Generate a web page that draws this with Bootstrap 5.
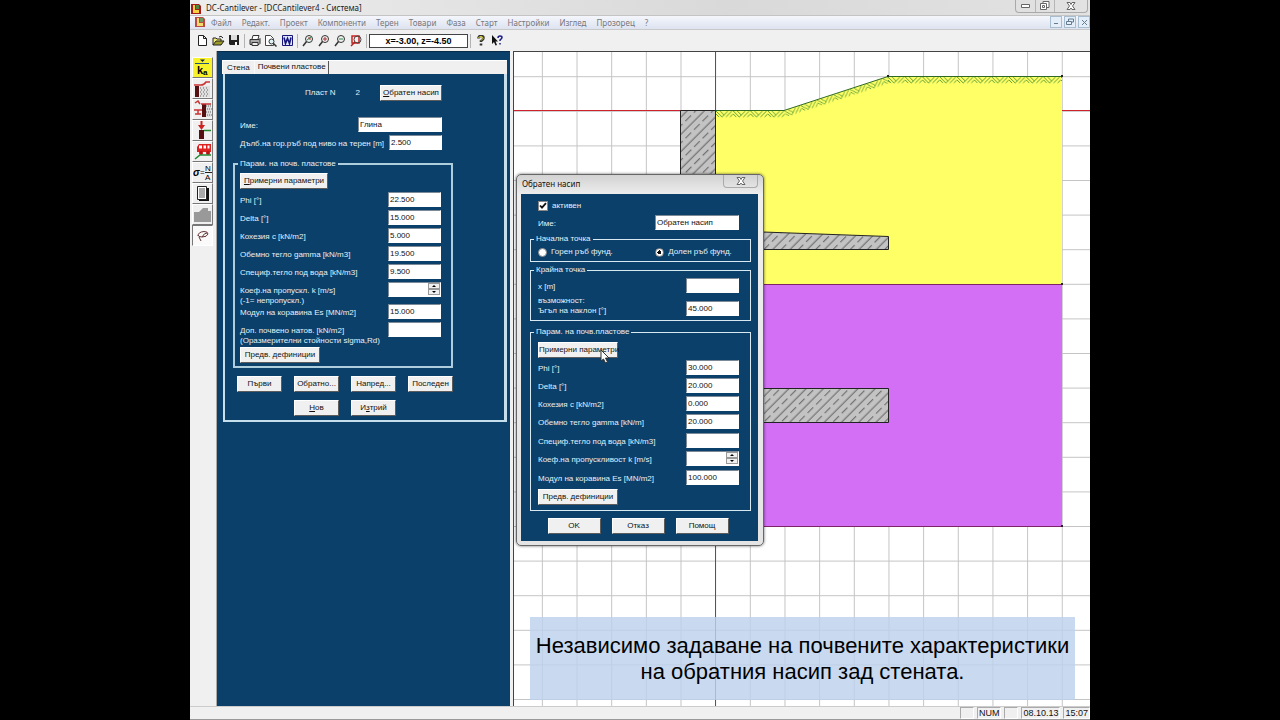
<!DOCTYPE html>
<html lang="bg">
<head>
<meta charset="utf-8">
<meta name="viewport" content="width=device-width, initial-scale=1">
<title>DC-Cantilever - [DCCantilever4 - Система]</title>
<link rel="stylesheet" href="https://cdn.jsdelivr.net/npm/bootstrap@5.3.0/dist/css/bootstrap.min.css">
<style>
:root{--navy:#0b406b;--face:#f0f0f0;--ui:"Liberation Sans",Arial,sans-serif;--shell:"Noto Sans","Open Sans",sans-serif}
body{background:#000;font:8px/10px var(--ui);color:#111}
.stage{padding:0 190px}
.app{min-height:100vh;background:var(--face)}
.titlebar{height:15px;background:linear-gradient(90deg,#ededed,#d9d9d9 60%,#e2e2e2);font:8px/15px var(--shell);color:#222;padding-left:1px}
.menubar{height:15px;background:linear-gradient(#f4f6fb,#dde3f0);border-bottom:1px solid #c8c8c8;border-top:1px solid #c4c4c4;font:8px/13px var(--shell);padding-left:5px}
.menubar a{color:#77777c;text-decoration:none;white-space:nowrap}
.menus{gap:10px;margin-left:5px}
.wctl{border:1px solid #a9a9a9;border-top:0;border-radius:0 0 4px 4px;height:13px;margin-right:2px}
.wctl button,.mdi button{border:0;background:none;padding:0;display:flex;align-items:center;justify-content:center}
.wctl button{width:19px;height:12px}
.wctl button:last-child{width:33px}
.wctl button+button{border-left:1px solid #b5b5b5}
.mdi{gap:2px}
.mdi button{width:12px;height:12px;border:1px solid #a8bdd0;background:#e3eef8}
.toolbar{height:21px;padding:0 4px}
.toolbar button{width:16px;height:16px;border:0;padding:0;background:none}
.toolbar svg{display:block;margin:auto}
.split{width:1px;height:14px;background:#b3b3b3;margin:0 2px}
.coord{width:99px;height:14px;border:1px solid #444;border-radius:0;background:#fff;font:bold 9px/12px var(--ui);text-align:center;padding:0}
.rail{width:27px;padding:6px 3px 0 2px;border-right:1px solid #aaa}
.rail button{display:block;width:21px;height:21px;padding:0;border:1px solid #fff;border-right-color:#777;border-bottom-color:#777;background:var(--face)}
.rail button.down{border-color:#777 #fff #fff #777;background:#fafafa}
.rail svg{display:block}
.side{width:293px;background:var(--navy);padding:8px 3px 0 5px;border-top:1px solid #082c4a}
.tabbar{background:var(--face);height:14px;border-top:1px solid #fff;border-left:1px solid #fff}
.tabbar a{color:#111;text-decoration:none;padding:2px 4px 0}
.tabbar a.on{border-right:1px solid #555;padding:1px 2px 0 3px;border-left:1px solid #fafafa}
.pane{border:2px solid #c6dfec;border-top:0;border-right-width:3px;margin-left:1px;padding:11px 8px 4px;color:#e4f1f8}
.navy-btn{border:1px solid #fff;border-right-color:#5c5c5c;border-bottom-color:#5c5c5c;background:var(--face);color:#111;height:16px;font:8px/12px var(--ui);padding:0;border-radius:0;white-space:nowrap;outline:0}
.w53{width:53px}.w61{width:62px}.w80{width:80px}.w88{width:88px}
.entry{width:53px;height:15px;border:1px solid #fff;border-top:1px solid #7b8a96;border-left:1px solid #7b8a96;border-radius:0;background:#fff;font:8px/12px var(--ui);color:#111;padding:0 1px 1px;flex:none}
.entry.wide{width:84px}
fieldset.box{border:2px solid #aecddd;padding:4px 10px 3px 5px;width:220px;margin-top:6px}
.box legend{float:none;width:auto;font:inherit;line-height:10px;height:10px;margin:0 0 0 -2px;padding:0 2px;color:inherit}
.fld{display:flex;justify-content:space-between;align-items:flex-start;height:18px}
.fld label{padding-top:4px;line-height:10px;white-space:nowrap}
.lead-row{padding:0 54px 0 7px}
.gap-below{margin-bottom:3px}
.h16{height:16px}.h19{height:19px}.h22{height:22px}.h25{height:25px}
.spin{width:53px;height:15px;flex:none;background:#fff;border:1px solid #7b8a96;border-right-color:#fff;border-bottom-color:#fff}
.spin input{border:0;min-width:0;width:38px;padding:0;height:13px;background:#fff;font:inherit}
.spin span{width:12px}
.spin button{height:6px;padding:0;border:1px solid #999;background:var(--face);display:flex;align-items:center;justify-content:center}
.navgrid{display:grid;grid-template-columns:repeat(4,45px);gap:8px 12px;margin:8px 0 0 4px}
.navgrid .second{grid-column:2}
.work{border-left:1px solid #444;border-top:1px solid #444;margin-left:3px;background:#fff;min-width:0;overflow:hidden}
.work svg.draw{position:absolute;left:0;top:0;width:576px;height:655px}
.dlg{position:absolute;left:2px;top:122px;width:248px;border:1px solid #666;border-radius:5px;background:linear-gradient(#d2d2d2,#eee 20px,#e4e4e4);box-shadow:0 0 3px rgba(0,0,0,.6);padding:0 5px 4px 4px}
.dlg-title{height:19px;font:8px/18px var(--shell)}
.dlg-title span{padding-left:1px}
.dlg-title button{width:35px;height:13px;border:1px solid #aaa;border-top:0;border-radius:0 0 4px 4px;background:none;padding:0;display:flex;align-items:center;justify-content:center}
.dlg-body{background:var(--navy);color:#e4f1f8;padding:7px 6px 7px 9px}
.dlg-body .box{border:1px solid #d8e9f2;padding:3px 11px 4px 7px;width:221px;margin-top:3px}
.dlg-body .box.tall{padding-top:5px;margin-top:6px;padding-bottom:5px}
.tall .gap-below{margin-bottom:2px}
.dlg-body .box legend{margin-left:-4px}
.dlg-foot{gap:11px;margin:7px 6px 0 0}
.inset8{padding:0 13px 0 8px}
.tick{width:10px;height:10px;margin:0;border-radius:0!important;flex:none;background-color:#fff!important;border:1px solid #888!important}
.tick[type=radio]{border-radius:50%!important;width:9px;height:9px}
.tick[type=radio]:checked{background:radial-gradient(circle,#111 0 2px,#fff 2px)!important}
.tick[type=checkbox]:checked{background:#fff url("data:image/svg+xml,%3Csvg xmlns='http://www.w3.org/2000/svg' viewBox='0 0 8 8'%3E%3Cpath d='M1 3.500l2 2.200 4-4.500' fill='none' stroke='%23111' stroke-width='1.800'/%3E%3C/svg%3E") center/8px no-repeat!important}
.caption{position:absolute;left:16px;right:15px;top:565px;height:83px;background:rgba(189,209,236,.82);color:#000;font:22px/26px var(--ui);text-align:center;padding-top:16px;white-space:nowrap}
.status{height:14px;border-top:1px solid #ccc;border-bottom:1px solid #999;font:9px/11px var(--ui);gap:3px}
.status span{height:12px;border:1px solid #aaa;border-right-color:#fff;border-bottom-color:#fff;min-width:14px;padding:0 1px}
.pointer{position:absolute;left:83px;top:174px}
</style>
</head>
<body>
<div class="stage">
<div class="app d-flex flex-column">
  <header>
    <div class="titlebar d-flex">
      <svg width="11" height="12" viewBox="0 0 11 12" class="me-1 mt-1 flex-shrink-0"><path d="M0 0h8l2 2v8H0z" fill="#a51c1c"/><path d="M2 1h2v5h4v3H2z" fill="#f6d33c"/><path d="M5 1h3v4H5z" fill="#4f8443"/></svg>
      <span class="flex-fill text-nowrap">DC-Cantilever - [DCCantilever4 - Система]</span>
      <div class="wctl d-flex">
        <button aria-label="Минимизиране"><svg width="9" height="5"><path d="M.5.5h8v3h-8z" fill="#fff" stroke="#666"/></svg></button>
        <button aria-label="Възстановяване"><svg width="10" height="10" fill="#fff" stroke="#666"><path d="M3 .5h6v6H3z"/><path d="M.5 2.500h6v6h-6z"/><path d="M2.500 4.500h2v2h-2z"/></svg></button>
        <button aria-label="Затваряне"><svg width="10" height="9"><path d="M1 .5h3l1 2 1-2h3L6.500 4 9 7.500H6L5 6 4 7.500H1L3.500 4z" fill="#fff" stroke="#666"/></svg></button>
      </div>
    </div>
    <nav class="menubar d-flex">
      <svg class="flex-shrink-0" width="11" height="12" viewBox="0 0 11 12"><path d="M0 1h8l2 2v8H0z" fill="#bb4a42"/><path d="M2 2h2v5h4v3H2z" fill="#f3dc6d"/><path d="M5 2h3v4H5z" fill="#6d9a62"/></svg>
      <div class="menus d-flex flex-fill">
        <a href="#">Файл</a><a href="#">Редакт.</a><a href="#">Проект</a><a href="#">Компоненти</a><a href="#">Терен</a><a href="#">Товари</a><a href="#">Фаза</a><a href="#">Старт</a><a href="#">Настройки</a><a href="#">Изглед</a><a href="#">Прозорец</a><a href="#">?</a>
      </div>
      <div class="mdi d-flex">
        <button aria-label="Свий"><svg width="6" height="6"><path d="M1 4.500h4" stroke="#657b90"/></svg></button>
        <button aria-label="Възстанови"><svg width="8" height="8" fill="none" stroke="#657b90"><path d="M2.500 3V1h5v3H6M.5 3.500h5v3h-5z"/></svg></button>
        <button aria-label="Затвори"><svg width="7" height="7"><path d="M1 1l5 5M6 1L1 6" stroke="#657b90"/></svg></button>
      </div>
    </nav>
    <div class="toolbar d-flex align-items-center">
      <button aria-label="Нов"><svg width="9" height="11"><path d="M.5.5h5l3 3v7h-8zM5.500.5v3h3" fill="#fff" stroke="#222"/></svg></button>
      <button aria-label="Отвори"><svg width="13" height="11"><path d="M1 10V3h3l1 1h4v2" fill="#f5ee7a" stroke="#222"/><path d="M1 10l3-4h8l-3 4z" fill="#9a9a28" stroke="#222"/><path d="M7 2q2-2 4 1" fill="none" stroke="#222"/></svg></button>
      <button aria-label="Запис"><svg width="11" height="11"><path d="M0 0h10v10H1L0 9z" fill="#222"/><path d="M2 0h6v5H2z" fill="#ddd"/><path d="M6 7h2v3H6z" fill="#fff"/></svg></button>
      <i class="split"></i>
      <button aria-label="Печат"><svg width="12" height="11"><path d="M3 4l1-3.500h6L9 4" fill="#fff" stroke="#333"/><path d="M1 4.500h9l1-1v5l-1 1H1z" fill="#aaa" stroke="#333"/><path d="M3 7.500h6v3H3z" fill="#eee" stroke="#333"/></svg></button>
      <button aria-label="Преглед"><svg width="12" height="12"><path d="M.5.5h5l3 3v7h-8z" fill="#fff" stroke="#444"/><circle cx="6.500" cy="6.500" r="2.500" fill="#dff2f5" stroke="#333"/><path d="M8.500 8.500l3 3" stroke="#333" stroke-width="1.500"/></svg></button>
      <button aria-label="Word"><svg width="11" height="11"><path d="M.5.5h10v10H.5z" fill="#dfe5ff" stroke="#15157a"/><path d="M2 2.500l1.500 6 2-5 2 5L9 2.500" fill="none" stroke="#15157a" stroke-width="1.600"/></svg></button>
      <i class="split"></i>
      <button aria-label="Мащаб"><svg width="12" height="12" fill="none"><circle cx="7" cy="4" r="3.500" fill="#e5f4ef" stroke="#333"/><path d="M4.500 6.500L1 11" stroke="#333" stroke-width="1.500"/><path d="M5 5l4-3" stroke="#2a8a50"/><path d="M6 3h2v2" stroke="#b33"/></svg></button>
      <button aria-label="Увеличи"><svg width="12" height="12" fill="none"><circle cx="7" cy="4" r="3.500" stroke="#333"/><path d="M4.500 6.500L1 11" stroke="#333" stroke-width="1.500"/><path d="M5 4h4M7 2v4" stroke="#a33"/></svg></button>
      <button aria-label="Намали"><svg width="12" height="12" fill="none"><circle cx="7" cy="4" r="3.500" stroke="#333"/><path d="M4.500 6.500L1 11" stroke="#333" stroke-width="1.500"/><path d="M5 4h4" stroke="#2a8a50"/></svg></button>
      <button aria-label="Прозорец"><svg width="12" height="12" fill="none"><path d="M2 1h7v7H2z" stroke="#c22" stroke-width="1.500"/><circle cx="7.500" cy="4.500" r="3.500" stroke="#444"/><path d="M5 7L1 11" stroke="#a22" stroke-width="1.500"/></svg></button>
      <i class="split"></i>
      <input class="coord" aria-label="Координати" value="x=-3.00, z=-4.50">
      <i class="split"></i>
      <button aria-label="Помощ"><svg width="8" height="11"><path d="M1.500 3.500q0-2.500 2.500-2.500t2.500 2q0 1.500-2.500 3v1M4 8.500v2" fill="none" stroke="#333" stroke-width="2.600"/><path d="M1.500 3q.5-1.500 2.500-1.500t2 2l-2 2" fill="none" stroke="#e6dc30"/></svg></button>
      <button aria-label="Контекстна помощ"><svg width="12" height="11"><path d="M1 0v9l2-2 1.500 3.500L6 10 4.500 6.500H7z" fill="#111"/><path d="M7 3q0-2 2-2t2 1.500q0 1-2 2.500v1M9 8v1.500" fill="none" stroke="#1c1c88" stroke-width="1.500"/></svg></button>
    </div>
  </header>

  <main class="d-flex flex-fill">
    <div class="rail flex-shrink-0">
      <button aria-label="ka"><svg width="19" height="19"><path fill="#f8f22a" d="M0 0h19v19H0z"/><path d="M7 1.500h5L9.500 4z" fill="#124"/><path d="M2 5.500h14" stroke="#257"/><text x="4" y="16" font-size="11" font-weight="bold" font-family="Liberation Sans">k</text><text x="10" y="17" font-size="8" font-weight="bold" font-family="Liberation Sans">a</text></svg></button>
      <button aria-label="Терен"><svg width="19" height="19"><path d="M2 7h4v11H2z" fill="#511"/><path d="M7 7h10v11H7z" fill="#e0e0e0"/><path d="M7 9h9M8 11h9M7 13h9M8 15h9M7 17h9" stroke="#666" stroke-dasharray="1 2"/><path d="M1 6h7q3 0 5-3h4" fill="none" stroke="#c33" stroke-width="1.600"/></svg></button>
      <button aria-label="Стена"><svg width="19" height="19"><path d="M9 4h4v13H9z" fill="#511"/><path d="M13 4h5v13h-5z" fill="#ddd"/><path d="M13 6h5M14 9h5M13 12h5M14 15h5" stroke="#666" stroke-dasharray="1 1"/><path d="M8 4h10M1 10h8M5 10v4M2 14h6M2 3l3-2 2 3" fill="none" stroke="#c33" stroke-width="1.500"/></svg></button>
      <button aria-label="Сила"><svg width="19" height="19"><path d="M6 9h5v9H6z" fill="#511"/><path d="M11 9.500h7" stroke="#283" stroke-width="1.500"/><path d="M8.500 0v5" stroke="#c22" stroke-width="2"/><path d="M5 4h7L8.500 9z" fill="#c22"/></svg></button>
      <button aria-label="Товар"><svg width="19" height="19"><path d="M4 5l2-3h12v8H4z" fill="#d22"/><path d="M6 3.500h3v3H6zM10.500 3.500h2.500v3h-2.500zM14.500 3.500h2v3h-2z" fill="#fff"/><circle cx="8" cy="11" r="2" fill="#b11"/><circle cx="15" cy="11" r="2" fill="#b11"/><path d="M2 17l5-4h11" fill="none" stroke="#283" stroke-width="1.500"/></svg></button>
      <button aria-label="Напрежение"><svg width="19" height="19" font-family="Liberation Sans" font-size="8"><text x="0" y="13" font-size="10" font-style="italic" font-weight="bold">σ</text><text x="7" y="12">=</text><text x="12" y="8">N</text><path d="M12 9.500h7" stroke="#222"/><text x="12" y="17">A</text></svg></button>
      <button aria-label="Протокол"><svg width="19" height="19"><path d="M6 4h10v13H6z" fill="#111"/><path d="M4.500 2.500h9v13h-9z" fill="#fff" stroke="#222"/><path d="M6 5h6M6 7h6M6 9h6M6 11h6M6 13h6" stroke="#555"/></svg></button>
      <button aria-label="Пласт"><svg width="19" height="19"><path d="M1 17V7h5l4-4h5v3h3v11z" fill="#999"/></svg></button>
      <button class="down" aria-label="Насип"><svg width="19" height="19" fill="none" stroke="#633"><path d="M5 10q0-4 6-4.500 4 0 4 2.500-1 3-6 3-4 0-4-2M6 11l2 4M9 11q2-4 5-4"/></svg></button>
    </div>

    <section class="side flex-shrink-0">
      <div class="tabbar d-flex"><a href="#">Стена</a><a href="#" class="on">Почвени пластове</a></div>
      <div class="pane">
        <div class="lead-row d-flex justify-content-end align-items-center">
          <span>Пласт N</span><span class="px-3 mx-1">2</span><button class="navy-btn w61"><u>О</u>братен насип</button>
        </div>
        <div class="fld lead-row mt-3"><label for="nm">Име:</label><input id="nm" class="entry wide" value="Глина"></div>
        <div class="fld lead-row"><label for="dp">Дълб.на гор.ръб под ниво на терен [m]</label><input id="dp" class="entry" value="2.500"></div>
        <fieldset class="box"><legend>Парам. на почв. пластове</legend>
          <button class="navy-btn w88 d-block gap-below"><u>П</u>римерни параметри</button>
          <div class="fld"><label for="a1">Phi [°]</label><input id="a1" class="entry" value="22.500"></div>
          <div class="fld"><label for="a2">Delta [°]</label><input id="a2" class="entry" value="15.000"></div>
          <div class="fld"><label for="a3">Кохезия c [kN/m2]</label><input id="a3" class="entry" value="5.000"></div>
          <div class="fld"><label for="a4">Обемно тегло gamma [kN/m3]</label><input id="a4" class="entry" value="19.500"></div>
          <div class="fld"><label for="a5">Специф.тегло под вода [kN/m3]</label><input id="a5" class="entry" value="9.500"></div>
          <div class="fld h22"><label for="a6">Коеф.на пропускл. k [m/s]<br>(-1= непропускл.)</label><div class="spin d-flex justify-content-between"><input id="a6"><span><button class="w-100" aria-label="Нагоре"><svg width="4" height="2"><path d="M0 2h4L2 0z"/></svg></button><button class="w-100" aria-label="Надолу"><svg width="4" height="2"><path d="M0 0h4L2 2z"/></svg></button></span></div></div>
          <div class="fld"><label for="a7">Модул на коравина Es [MN/m2]</label><input id="a7" class="entry" value="15.000"></div>
          <div class="fld h25"><label for="a8">Доп. почвено натов. [kN/m2]<br>(Оразмерителни стойности sigma,Rd)</label><input id="a8" class="entry"></div>
          <button class="navy-btn w80 d-block">Предв. дефиниции</button>
        </fieldset>
        <div class="navgrid">
          <button class="navy-btn">Първи</button><button class="navy-btn">Обратно...</button><button class="navy-btn">Напред...</button><button class="navy-btn">Последен</button>
          <button class="navy-btn second"><u>Н</u>ов</button><button class="navy-btn">И<u>з</u>трий</button>
        </div>
      </div>
    </section>

    <section class="work flex-fill position-relative">
      <svg class="draw" viewBox="514 52 576 655">
        <defs>
          <pattern id="grid" x="680.500" y="76.200" width="34.660" height="34.600" patternUnits="userSpaceOnUse"><path d="M.5 0v35M0 .5h35" stroke="#c4c4c4" fill="none"/></pattern>
          <pattern id="hatch" width="12.200" height="12" patternUnits="userSpaceOnUse" patternTransform="rotate(45)"><path fill="#c3c3c3" d="M-1-1h15v15H-1z"/><path d="M3-1v14" stroke="#444" stroke-width=".8"/><path d="M9.100 1v8" stroke="#444" stroke-width=".8"/></pattern>
          <pattern id="turf" width="17.300" height="8" patternUnits="userSpaceOnUse"><path d="M0 1l6 6M4 1l4 4M6 7l6-6M10 7l6-6M14 7l3-3M0 4l3 3" stroke="#4d9430" stroke-width=".9" fill="none"/></pattern>
        </defs>
        <path fill="url(#grid)" d="M514 52h576v655H514z"/>
        <rect x="514" y="110" width="576" height="1" fill="#d0202c"/>
        <rect x="715" y="52" width="1" height="655" fill="#d0202c"/>
        <path d="M716 110.500H784l104-34h174V284H716z" fill="#ff6"/>
        <path d="M716 284.500H1062v242H716z" fill="#d26ff5"/>
        <path d="M715.500 284.500H1062M715.500 526.500H1062" stroke="#7d2467"/>
        <g fill="url(#turf)"><path d="M0 0h69v8H0z" transform="translate(716 110)"/><path d="M0 0h109v8H0z" transform="translate(784 110) rotate(-18.100)"/><path d="M0 0h174v8H0z" transform="translate(888 76)"/></g>
        <path d="M715 110.500h69l104-34h174" fill="none" stroke="#2f6a22"/>
        <g fill="url(#hatch)" stroke="#222"><path d="M680.500 110.500h35v312h-35z"/><path d="M715 230.500l48 1.500 125.500 4.500v13H715z"/><path d="M715 388.500h173.500v34H715z"/></g>
        <path d="M887 75h2v2h-2zM1061 75h2v2h-2zM1061 283h2v2h-2zM1061 525h2v2h-2z" fill="#222"/>
      </svg>

      <div class="dlg">
        <div class="dlg-title d-flex justify-content-between"><span>Обратен насип</span><button aria-label="Затвори"><svg width="10" height="9"><path d="M1 .5h3l1 2 1-2h3L6.500 4 9 7.500H6L5 6 4 7.500H1L3.500 4z" fill="#fff" stroke="#666"/></svg></button></div>
        <div class="dlg-body">
          <div class="inset8 d-flex gap-1 align-items-center"><input type="checkbox" id="act" class="form-check-input tick" checked><label for="act">активен</label></div>
          <div class="inset8 fld h16 mt-1"><label for="b0">Име:</label><input id="b0" class="entry wide" value="Обратен насип"></div>
          <fieldset class="box pb-1"><legend>Начална точка</legend>
            <div class="row g-0"><div class="col-7 d-flex gap-1 align-items-center"><input type="radio" name="pt" id="p1" class="form-check-input tick"><label for="p1">Горен ръб фунд.</label></div><div class="col-5 d-flex gap-1 align-items-center"><input type="radio" name="pt" id="p2" class="form-check-input tick" checked><label for="p2" class="text-nowrap">Долен ръб фунд.</label></div></div>
          </fieldset>
          <fieldset class="box"><legend>Крайна точка</legend>
            <div class="fld h16"><label for="b1">x [m]</label><input id="b1" class="entry"></div>
            <div class="fld h22 align-items-end"><label for="b2" class="pt-0">възможност:<br>Ъгъл на наклон [°]</label><input id="b2" class="entry" value="45.000"></div>
          </fieldset>
          <fieldset class="box tall"><legend>Парам. на почв.пластове</legend>
            <button class="navy-btn w80 d-block gap-below">Примерни параметри</button>
            <div class="fld"><label for="c1">Phi [°]</label><input id="c1" class="entry" value="30.000"></div>
            <div class="fld"><label for="c2">Delta [°]</label><input id="c2" class="entry" value="20.000"></div>
            <div class="fld"><label for="c3">Кохезия c [kN/m2]</label><input id="c3" class="entry" value="0.000"></div>
            <div class="fld h19"><label for="c4">Обемно тегло gamma [kN/m]</label><input id="c4" class="entry" value="20.000"></div>
            <div class="fld"><label for="c5">Специф.тегло под вода [kN/m3]</label><input id="c5" class="entry"></div>
            <div class="fld h19"><label for="c6">Коеф.на пропускливост k [m/s]</label><div class="spin d-flex justify-content-between"><input id="c6"><span><button class="w-100" aria-label="Нагоре"><svg width="4" height="2"><path d="M0 2h4L2 0z"/></svg></button><button class="w-100" aria-label="Надолу"><svg width="4" height="2"><path d="M0 0h4L2 2z"/></svg></button></span></div></div>
            <div class="fld h19"><label for="c7">Модул на коравина Es [MN/m2]</label><input id="c7" class="entry" value="100.000"></div>
            <button class="navy-btn w80 d-block">Предв. дефиниции</button>
          </fieldset>
          <div class="dlg-foot d-flex justify-content-center"><button class="navy-btn w53">OK</button><button class="navy-btn w53">Отказ</button><button class="navy-btn w53">Помощ</button></div>
        </div>
        <svg class="pointer" width="10" height="15"><path d="M1 1v11l2.500-2 2 4 2-1-2-4H9z" fill="#fff" stroke="#333"/></svg>
      </div>

      <div class="caption">Независимо задаване на почвените характеристики<br>на обратния насип зад стената.</div>
    </section>
  </main>
  <footer class="status d-flex justify-content-end align-items-center"><span></span><span>NUM</span><span></span><span>08.10.13</span><span>15:07</span></footer>
</div>
</div>
<script src="https://cdn.jsdelivr.net/npm/bootstrap@5.3.0/dist/js/bootstrap.bundle.min.js"></script>
</body>
</html>
